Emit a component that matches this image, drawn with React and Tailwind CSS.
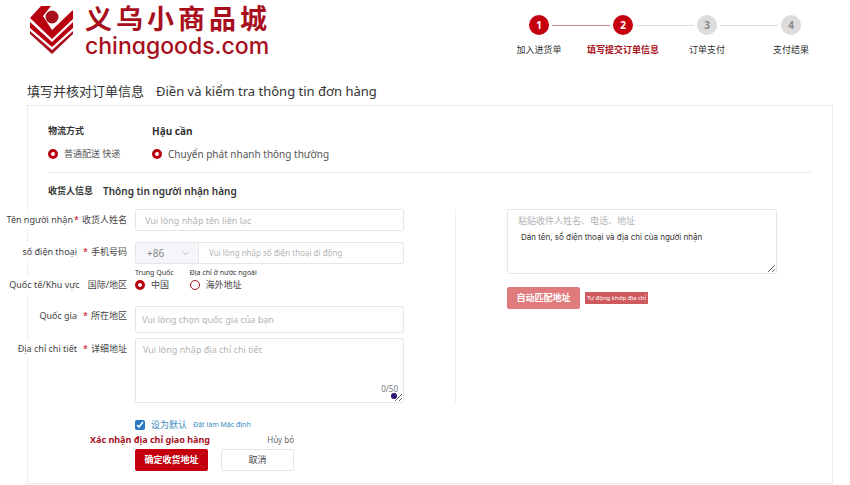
import React, { useState } from "react";
import { ChevronDown } from "lucide-react";

const steps = [
  { id: 1, label: "加入进货单", active: true },
  { id: 2, label: "填写提交订单信息", active: true, current: true },
  { id: 3, label: "订单支付" },
  { id: 4, label: "支付结果" },
];

const radioClass =
  "appearance-none w-[10px] h-[10px] shrink-0 rounded-full border border-[#a8101c] bg-white checked:border-[3px] checked:border-[#b8000f]";
const boxClass =
  "w-full border border-[#e6e6e6] rounded-[2px] bg-white outline-none placeholder:text-[#b4b4b4]";

const Logo = () => (
  <div className="flex items-start gap-[10px] text-[#a80f1d]">
    <svg width="46" height="50" viewBox="0 0 46 50" fill="currentColor" className="mt-[5px]">
      <path fill="#b8000f" d="M12 1h10l-8 10 9 14L44 5v9L23 34 1 13z" />
      <circle cx="23" cy="12" r="6.5" />
      <path fill="#b8000f" d="M1 17l22 20 21-20v6L23 42 1 23z" />
      <path d="M1 26l22 19 21-19v3L23 49 1 29z" />
    </svg>
    <div className="w-[182px]">
      <div className="flex justify-between text-[27px] leading-[32px] font-bold mt-[3px]">
        {"义乌小商品城".split("").map((char) => (
          <span key={char}>{char}</span>
        ))}
      </div>
      <div className="font-['Inter',sans-serif] [font-feature-settings:'cv11'] font-medium text-[23px] leading-[22px]">
        chinagoods.com
      </div>
    </div>
  </div>
);

const Steps = () => (
  <ol className="flex pt-[15px]">
    {steps.map((step, index) => (
      <li key={step.id} className="w-[84px] flex flex-col items-center">
        <div className="w-full flex items-center justify-between">
          <span
            className={`h-px w-[29px] ${
              index === 0 ? "" : step.active ? "bg-[#d08a90]" : "bg-[#dedede]"
            }`}
          />
          <span
            className={`w-5 h-5 rounded-full flex items-center justify-center text-[10px] font-bold ${
              step.active ? "bg-[#c4000f] text-white" : "bg-[#dcdcdc] text-[#888]"
            }`}
          >
            {step.id}
          </span>
          <span
            className={`h-px w-[29px] ${
              index === steps.length - 1 ? "" : index === 0 ? "bg-[#d08a90]" : "bg-[#dedede]"
            }`}
          />
        </div>
        <span
          className={`mt-2 text-[9px] leading-[14px] whitespace-nowrap ${
            step.current ? "text-[#a8101c] font-bold" : "text-[#333]"
          }`}
        >
          {step.label}
        </span>
      </li>
    ))}
  </ol>
);

// Label sits left of the field and may hang over the panel border
const Label = ({ vi, zh, required, tight, htmlFor }) => (
  <label
    htmlFor={htmlFor}
    className="flex items-center justify-end whitespace-nowrap text-[9px] leading-[20px] text-[#444]"
  >
    <span className="bg-white">{vi}</span>
    <span className={`text-right pr-[3px] text-[#c4000f] ${tight ? "w-[9px]" : required ? "w-[14px]" : "w-2"}`}>
      {required ? "*" : ""}
    </span>
    <span>{zh}</span>
  </label>
);

const App = () => {
  const [shipping, setShipping] = useState("zh");
  const [region, setRegion] = useState("china");
  const [isDefault, setIsDefault] = useState(true);
  const [address, setAddress] = useState("");

  return (
    <div className="bg-white text-[#333] font-['Noto_Sans','Noto_Sans_CJK_SC',sans-serif]">
      <header className="flex justify-between items-start pl-[29px] pr-[17px]">
        <Logo />
        <Steps />
      </header>

      <main className="pl-[27px] pr-[17px]">
        <h1 className="flex items-center gap-3 mt-[24px] text-[13px] leading-[20px]">
          <span>填写并核对订单信息</span>
          <span>Điền và kiểm tra thông tin đơn hàng</span>
        </h1>

        <section className="mt-1 border border-[#ececec] pb-3">
          <div className="mx-5 pt-4 pb-[9px] border-b border-[#ececec]">
            <div className="grid grid-cols-[104px_1fr] items-center text-[10px] leading-[18px] font-bold">
              <h2 className="text-[9px]">物流方式</h2>
              <h2>Hậu cần</h2>
            </div>
            <div className="grid grid-cols-[104px_1fr] items-center mt-[5px] text-[10px] leading-[18px] text-[#555]">
              <label className="flex items-center gap-[6px] text-[9px]">
                <input type="radio" name="shipping-zh" className={radioClass} checked={shipping !== ""} onChange={() => setShipping("zh")} />
                普通配送 快递
              </label>
              <label className="flex items-center gap-[6px]">
                <input type="radio" name="shipping-vi" className={radioClass} checked={shipping !== ""} onChange={() => setShipping("vi")} />
                Chuyển phát nhanh thông thường
              </label>
            </div>
          </div>

          <h2 className="mx-5 mt-[9px] flex items-center gap-[10px] text-[10px] leading-[18px] font-bold">
            <span className="text-[9px]">收货人信息</span>
            <span className="font-semibold">Thông tin người nhận hàng</span>
          </h2>

          <div className="mt-[9px] flex items-start">
            <form className="-ml-7 grid grid-cols-[127px_269px] gap-x-2" onSubmit={(e) => e.preventDefault()}>
              <Label htmlFor="name" vi="Tên người nhận" zh="收货人姓名" required tight />
              <input id="name" className={`${boxClass} h-[22px] px-[9px] text-[9px]`} placeholder="Vui lòng nhập tên liên lạc" />

              <div className="mt-[11px]">
                <Label htmlFor="phone" vi="số điện thoại" zh="手机号码" required />
              </div>
              <div className="mt-[11px] flex h-[22px] border border-[#e6e6e6] rounded-[2px]">
                <div className="grid grid-cols-1 items-center w-[63px] bg-[#f5f6f9] border-r border-[#e6e6e6]">
                  <select aria-label="Country code" className="col-start-1 row-start-1 appearance-none w-full pl-[11px] text-[10px] text-[#888] outline-none">
                    <option>+86</option>
                  </select>
                  <ChevronDown size={9} className="col-start-1 row-start-1 justify-self-end mr-2 text-[#aaa] pointer-events-none" />
                </div>
                <input id="phone" type="tel" className="flex-1 min-w-0 px-[10px] text-[8px] outline-none placeholder:text-[#b4b4b4]" placeholder="Vui lòng nhập số điện thoại di động" />
              </div>

              <div className="mt-[11px]">
                <Label vi="Quốc tế/Khu vực" zh="国际/地区" />
              </div>
              <div className="mt-1 flex gap-4 text-[7px] leading-[10px]">
                <label>
                  Trung Quốc
                  <span className="flex items-center gap-[6px] text-[9px] leading-[14px] text-[#444]">
                    <input type="radio" name="region" className={radioClass} checked={region === "china"} onChange={() => setRegion("china")} />
                    中国
                  </span>
                </label>
                <label>
                  Địa chỉ ở nước ngoài
                  <span className="flex items-center gap-[6px] text-[9px] leading-[14px] text-[#444]">
                    <input type="radio" name="region" className={radioClass} checked={region === "abroad"} onChange={() => setRegion("abroad")} />
                    海外地址
                  </span>
                </label>
              </div>

              <div className="mt-[11px]">
                <Label htmlFor="country" vi="Quốc gia" zh="所在地区" required />
              </div>
              <input id="country" className={`${boxClass} mt-[11px] h-[27px] px-[6px] text-[9px]`} placeholder="Vui lòng chọn quốc gia của bạn" />

              <div className="mt-[6px]">
                <Label htmlFor="address" vi="Địa chỉ chi tiết" zh="详细地址" required />
              </div>
              <div className="relative mt-[5px]">
                <textarea
                  id="address"
                  maxLength={50}
                  value={address}
                  onChange={(e) => setAddress(e.target.value)}
                  className={`${boxClass} block h-[65px] px-[7px] py-1 text-[9px] leading-[14px]`}
                  placeholder="Vui lòng nhập địa chỉ chi tiết"
                />
                <span className="absolute right-[6px] bottom-2 text-[8px] leading-[12px] text-[#777]">
                  {address.length}/50
                </span>
                <span className="absolute right-[7px] bottom-1 w-[6px] h-[6px] rounded-full bg-[#2e1070]" />
              </div>

              <label className="col-start-2 mt-[15px] flex items-center gap-[6px] text-[9px] leading-[14px] text-[#3a8bc0]">
                <input type="checkbox" className="w-[10px] h-[10px] accent-[#2878c8]" checked={isDefault} onChange={(e) => setIsDefault(e.target.checked)} />
                设为默认
                <span className="text-[7px]">Đặt làm Mặc định</span>
              </label>

              <div className="col-span-2 pl-[90px] flex justify-between items-center pr-[110px] leading-[16px] whitespace-nowrap">
                <span className="text-[9px] font-bold text-[#a8101c]">Xác nhận địa chỉ giao hàng</span>
                <span className="text-[8px] text-[#666]">Hủy bỏ</span>
              </div>

              <div className="col-start-2 mt-px flex gap-[13px] text-[9px]">
                <button type="submit" className="w-[73px] h-[22px] rounded-[2px] bg-[#c4000f] text-white font-bold">
                  确定收货地址
                </button>
                <button type="button" className="w-[73px] h-[22px] rounded-[2px] border border-[#e4e4e4] bg-white text-[#444]">
                  取消
                </button>
              </div>
            </form>

            <div className="ml-[51px] h-[195px] border-l border-[#f0f0f0]" />

            <div className="ml-[51px] w-[270px]">
              <div className="relative">
                <textarea aria-label="粘贴收件人姓名、电话、地址" className={`${boxClass} block h-[65px] px-[10px] py-1 text-[9px] leading-[14px]`} placeholder="粘贴收件人姓名、电话、地址" />
                <p className="absolute left-[14px] top-[22px] text-[8px] leading-[12px] font-['Inter','Noto_Sans',sans-serif]">
                  Dán tên, số điện thoại và địa chỉ của người nhận
                </p>
              </div>
              <div className="mt-[13px] flex items-center gap-[5px]">
                <button type="button" className="w-[73px] h-[22px] rounded-[2px] bg-[#e07b7d] text-white text-[9px] font-bold">
                  自动匹配地址
                </button>
                <span className="w-[63px] h-3 bg-[#cf5a5e] text-white text-[6px] leading-[12px] text-center whitespace-nowrap">
                  Tự động khớp địa chỉ
                </span>
              </div>
            </div>
          </div>
        </section>
      </main>
    </div>
  );
};

export default App;
